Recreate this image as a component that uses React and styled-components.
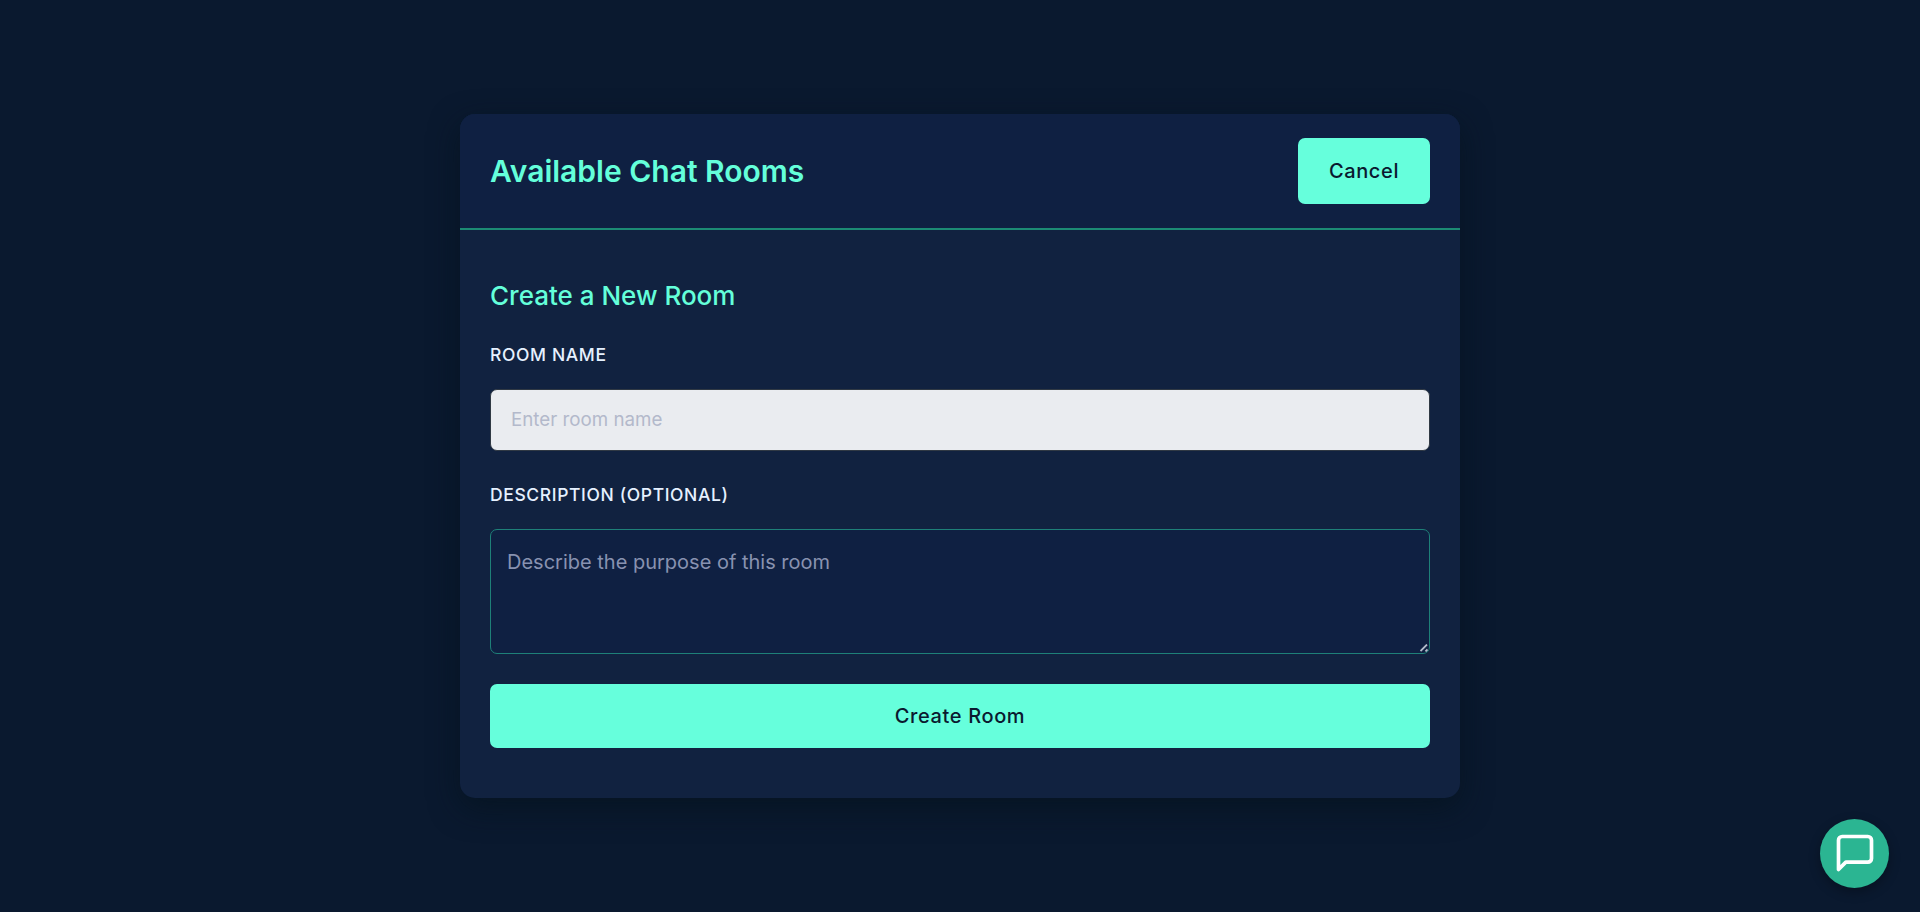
import React from "react";
import styled, { createGlobalStyle } from "styled-components";

const GlobalStyle = createGlobalStyle`
  *, *::before, *::after { box-sizing: border-box; }
  body {
    margin: 0;
    background: #0a192f;
    color: #e6f1ff;
    font-family: Inter, "Liberation Sans", sans-serif;
  }
`;

const Page = styled.main`
  display: flex;
  justify-content: center;
  align-items: center;
  min-height: 100vh;
`;

const Card = styled.section`
  width: 1000px;
  height: 684px;
  border-radius: 15px;
  overflow: hidden;
  background: #112240;
  box-shadow: 0 10px 30px rgba(4, 18, 28, 0.65);
`;

const Header = styled.header`
  display: flex;
  justify-content: space-between;
  align-items: center;
  height: 116px;
  padding: 0 30px;
  background: #0f2042;
  border-bottom: 2px solid #1c8b74;
`;

const Title = styled.h1`
  margin: 0;
  font-size: 30px;
  font-weight: 600;
  line-height: 36px;
  color: #64ffda;
`;

const Button = styled.button`
  display: ${({ $block }) => ($block ? "block" : "inline-block")};
  width: ${({ $block }) => ($block ? "100%" : "132px")};
  height: ${({ $block }) => ($block ? "64px" : "66px")};
  padding: 0;
  border: 0;
  border-radius: 7px;
  background: #66ffdc;
  color: #0a192f;
  font-family: inherit;
  font-size: 20px;
  font-weight: 500;
  letter-spacing: 0.625px;
`;

const Form = styled.form`
  display: flex;
  flex-direction: column;
  padding: 50px 30px 0;
`;

const Subtitle = styled.h2`
  margin: 0 0 29px;
  font-size: 26px;
  font-weight: 500;
  line-height: 32px;
  color: #64ffda;
`;

const Label = styled.label`
  margin-bottom: 20px;
  font-size: 17.5px;
  font-weight: 500;
  line-height: 28px;
  letter-spacing: 0.625px;
  text-transform: uppercase;
`;

const Input = styled.input`
  height: 62px;
  margin-bottom: 30px;
  padding: 0 20px 1px;
  border: 1px solid #303944;
  border-radius: 7px;
  background: #eaecf0;
  color: #112240;
  font-family: inherit;
  font-size: 18.75px;
  &::placeholder { color: #b3b9cb; opacity: 1; }
`;

const TextAreaWrap = styled.div`
  position: relative;
  display: flex;
  margin-bottom: 30px;
`;

const TextArea = styled.textarea`
  width: 100%;
  height: 125px;
  padding: 16px;
  border: 1px solid #1e8078;
  border-radius: 7px;
  background: #0f2042;
  color: #e6f1ff;
  font-family: inherit;
  font-size: 20px;
  line-height: 32px;
  resize: none;
  &::placeholder { color: #8892b0; opacity: 1; }
`;

const ResizeGrip = styled.svg`
  position: absolute;
  right: 2px;
  bottom: 2px;
  pointer-events: none;
`;

const ChatButton = styled.button`
  position: fixed;
  right: 31px;
  bottom: 24px;
  display: flex;
  align-items: center;
  justify-content: center;
  width: 69px;
  height: 69px;
  padding: 0 0 1px;
  border: 0;
  border-radius: 50%;
  background: #2bb592;
  color: #fff;
  box-shadow: 0 4px 12px rgba(0, 0, 0, 0.3);
`;

const ChatIcon = () => (
  <svg
    width="44"
    height="44"
    viewBox="0 0 24 24"
    fill="none"
    stroke="currentColor"
    strokeWidth="2"
    strokeLinecap="round"
    strokeLinejoin="round"
  >
    <path d="M21 15a2 2 0 0 1-2 2H7l-4 4V5a2 2 0 0 1 2-2h14a2 2 0 0 1 2 2z" />
  </svg>
);

export default function App() {
  return (
    <>
      <GlobalStyle />
      <Page>
        <Card>
          <Header>
            <Title>Available Chat Rooms</Title>
            <Button type="button">Cancel</Button>
          </Header>
          <Form>
            <Subtitle>Create a New Room</Subtitle>
            <Label htmlFor="room-name">Room Name</Label>
            <Input id="room-name" placeholder="Enter room name" />
            <Label htmlFor="room-description">Description (Optional)</Label>
            <TextAreaWrap>
              <TextArea id="room-description" placeholder="Describe the purpose of this room" />
              <ResizeGrip width="8" height="8" viewBox="0 0 8 8" fill="none">
                <path d="M0.5 7 7 0.5M5.5 7.5 7.5 5.5" stroke="#b4bccb" strokeWidth="1.8" />
              </ResizeGrip>
            </TextAreaWrap>
            <Button type="button" $block>Create Room</Button>
          </Form>
        </Card>
      </Page>
      <ChatButton type="button" aria-label="Open chat">
        <ChatIcon />
      </ChatButton>
    </>
  );
}
